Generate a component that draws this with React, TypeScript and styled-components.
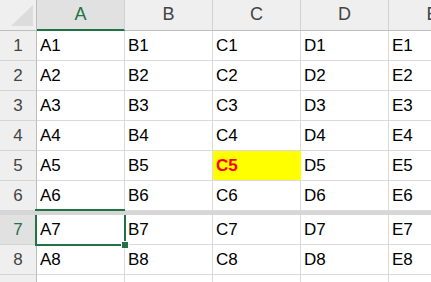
import styled, { createGlobalStyle } from "styled-components";

const GREEN = "#217346";
const COLS = ["A", "B", "C", "D", "E"];
const TOP_ROWS = [1, 2, 3, 4, 5, 6];
const BOTTOM_ROWS = [7, 8, 9];

const GlobalStyle = createGlobalStyle`
  html, body {
    margin: 0;
    padding: 0;
    background: #ffffff;
  }
  body {
    font-family: "Liberation Sans", Arial, sans-serif;
  }
`;

const cellText = (col: string, row: number) => (row === 9 ? "" : `${col}${row}`);

const App = () => {
  const renderRow = (row: number) => (
    <Row key={row}>
      <RowHeader $active={row === 7}>{row}</RowHeader>
      {COLS.map((col) => {
        const id = `${col}${row}`;
        return (
          <Cell
            key={id}
            $highlight={id === "C5"}
            $selected={id === "A7"}
            $selectTop={id === "A6"}
          >
            {cellText(col, row)}
          </Cell>
        );
      })}
    </Row>
  );

  return (
    <>
      <GlobalStyle />
      <Sheet>
        <HeaderRow>
          <Corner>
            <svg width="37" height="31" viewBox="0 0 37 31">
              <polygon points="33,5 33,26 11,26" fill="#dcdcdc" />
            </svg>
          </Corner>
          {COLS.map((col) => (
            <ColHeader key={col} $active={col === "A"}>
              {col}
            </ColHeader>
          ))}
        </HeaderRow>
        {TOP_ROWS.map(renderRow)}
        <FreezeBar />
        {BOTTOM_ROWS.map(renderRow)}
      </Sheet>
    </>
  );
};

export default App;

const Sheet = styled.div`
  width: 431px;
  height: 282px;
  overflow: hidden;
  display: flex;
  flex-direction: column;
  background: #ffffff;
`;

const HeaderRow = styled.div`
  display: flex;
  height: 31px;
  flex-shrink: 0;
`;

const Row = styled.div`
  display: flex;
  height: 30px;
  flex-shrink: 0;
`;

const Corner = styled.div`
  width: 37px;
  flex-shrink: 0;
  box-sizing: border-box;
  background: #efefef;
  border-right: 1px solid #bdbdbd;
  border-bottom: 1px solid #bdbdbd;
  svg {
    display: block;
  }
`;

const ColHeader = styled.div<{ $active?: boolean }>`
  width: 88px;
  flex-shrink: 0;
  box-sizing: border-box;
  display: flex;
  align-items: center;
  justify-content: center;
  padding-bottom: 2px;
  font-size: 18px;
  line-height: 1;
  color: ${(p) => (p.$active ? GREEN : "#444444")};
  background: ${(p) => (p.$active ? "#e1e1e1" : "#efefef")};
  border-right: 1px solid #d2d2d2;
  border-bottom: ${(p) => (p.$active ? `2px solid ${GREEN}` : "1px solid #bdbdbd")};
`;

const RowHeader = styled.div<{ $active?: boolean }>`
  width: 37px;
  flex-shrink: 0;
  box-sizing: border-box;
  display: flex;
  align-items: center;
  justify-content: center;
  font-size: 17px;
  line-height: 1;
  color: ${(p) => (p.$active ? GREEN : "#444444")};
  background: ${(p) => (p.$active ? "#e1e1e1" : "#efefef")};
  border-right: 1px solid #bdbdbd;
  border-bottom: 1px solid #d4d4d4;
`;

const Cell = styled.div<{ $highlight?: boolean; $selected?: boolean; $selectTop?: boolean }>`
  position: relative;
  width: 88px;
  flex-shrink: 0;
  box-sizing: border-box;
  display: flex;
  align-items: center;
  padding: 0 3px 0 3px;
  font-size: 17px;
  line-height: 1;
  color: ${(p) => (p.$highlight ? "#ff0000" : "#000000")};
  font-weight: ${(p) => (p.$highlight ? 700 : 400)};
  background: ${(p) => (p.$highlight ? "#ffff00" : "#ffffff")};
  border-right: 1px solid ${(p) => (p.$highlight ? "#ffff00" : "#dadada")};
  border-bottom: 1px solid #dadada;

  ${(p) =>
    p.$selectTop &&
    `
    &::after {
      content: "";
      position: absolute;
      left: -2px;
      right: -2px;
      bottom: -1px;
      height: 2px;
      background: ${GREEN};
    }
  `}

  ${(p) =>
    p.$selected &&
    `
    &::after {
      content: "";
      position: absolute;
      left: -2px;
      right: -2px;
      top: 0;
      bottom: -2px;
      border: 2px solid ${GREEN};
      border-top: none;
      z-index: 1;
    }
    &::before {
      content: "";
      position: absolute;
      right: -4px;
      bottom: -4px;
      width: 6px;
      height: 6px;
      background: ${GREEN};
      box-shadow: 0 0 0 1px #ffffff;
      z-index: 2;
    }
  `}
`;

const FreezeBar = styled.div`
  height: 4px;
  flex-shrink: 0;
  background: #d6d6d6;
`;
